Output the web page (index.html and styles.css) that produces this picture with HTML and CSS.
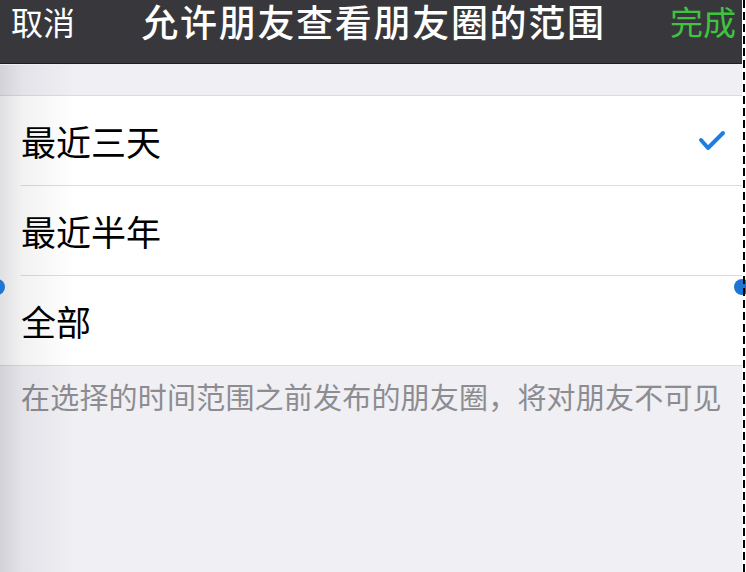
FILE: index.html
```html
<!DOCTYPE html>
<html lang="zh-CN">
<head>
    <meta charset="UTF-8">
    <meta name="viewport" content="width=device-width, initial-scale=1.0">
    <title>允许朋友查看朋友圈的范围</title>
    <link rel="stylesheet" href="styles.css">
</head>
<body>
    <div class="screen">
        <header class="nav">
            <span class="nav-cancel">取消</span>
            <h1 class="nav-title">允许朋友查看朋友圈的范围</h1>
            <span class="nav-done">完成</span>
        </header>

        <div class="gap"></div>

        <ul class="options">
            <li class="option">
                <span>最近三天</span>
                <svg class="check" width="28" height="22" viewBox="0 0 28 22">
                    <polyline points="3,10 10,18 25,3" fill="none" stroke="#1a7ee2" stroke-width="4" stroke-linecap="round" stroke-linejoin="round"/>
                </svg>
            </li>
            <li class="option"><span>最近半年</span></li>
            <li class="option"><span>全部</span></li>
        </ul>

        <p class="note">在选择的时间范围之前发布的朋友圈，将对朋友不可见</p>

        <div class="edge-shadow"></div>
        <span class="handle handle-left"></span>
        <span class="handle handle-right"></span>
    </div>
</body>
</html>
```

FILE: styles.css
```css
body {
    margin: 0;
    background-color: #fff;
    font-family: "Noto Sans CJK SC", "Noto Sans", sans-serif;
    overflow: hidden;
}
.screen {
    position: relative;
    width: 742px;
    height: 572px;
    background-color: #efeff4;
}
.screen:after {
    content: "";
    position: absolute;
    top: 0;
    bottom: 0;
    right: -3px;
    width: 2px;
    background: repeating-linear-gradient(to bottom, #000 0, #000 8px, transparent 8px, transparent 12px);
}
.nav {
    display: grid;
    grid-template-columns: 1fr auto 1fr;
    align-items: start;
    height: 64px;
    padding: 0 6px 0 11px;
    box-sizing: border-box;
    background-color: #38383c;
    border-bottom: 1px solid #1e1e20;
    color: #fff;
}
.nav-cancel {
    font-size: 32px;
    line-height: 42px;
}
.nav-title {
    margin: 0;
    font-size: 37px;
    font-weight: 500;
    line-height: 42px;
    letter-spacing: 1.7px;
}
.nav-done {
    justify-self: end;
    font-size: 33px;
    line-height: 42px;
    color: #3ec43f;
}
.gap {
    height: 31px;
}
.options {
    list-style: none;
    margin: 0;
    padding: 0 0 0 21px;
    background-color: #fff;
    border-top: 1px solid #dcdce0;
    border-bottom: 1px solid #dcdce0;
}
.option {
    display: flex;
    align-items: center;
    justify-content: space-between;
    height: 89px;
    padding-right: 16px;
    font-size: 35px;
    color: #000;
    border-bottom: 1px solid #dcdce0;
}
.option:last-child {
    border-bottom: none;
}
.check {
    display: block;
}
.note {
    margin: 0;
    padding: 10px 0 0 21px;
    font-size: 29px;
    line-height: 40px;
    letter-spacing: 0.2px;
    color: #8c8c91;
}
.edge-shadow {
    position: absolute;
    top: 65px;
    left: 0;
    bottom: 0;
    width: 76px;
    background: linear-gradient(to right, rgba(0, 0, 20, 0.12), rgba(0, 0, 20, 0.05) 30%, rgba(0, 0, 20, 0));
    pointer-events: none;
}
.handle {
    position: absolute;
    top: 279px;
    width: 16px;
    height: 16px;
    border-radius: 50%;
    background-color: #1f76d2;
}
.handle-left {
    left: -11px;
}
.handle-right {
    right: -8px;
}
```
